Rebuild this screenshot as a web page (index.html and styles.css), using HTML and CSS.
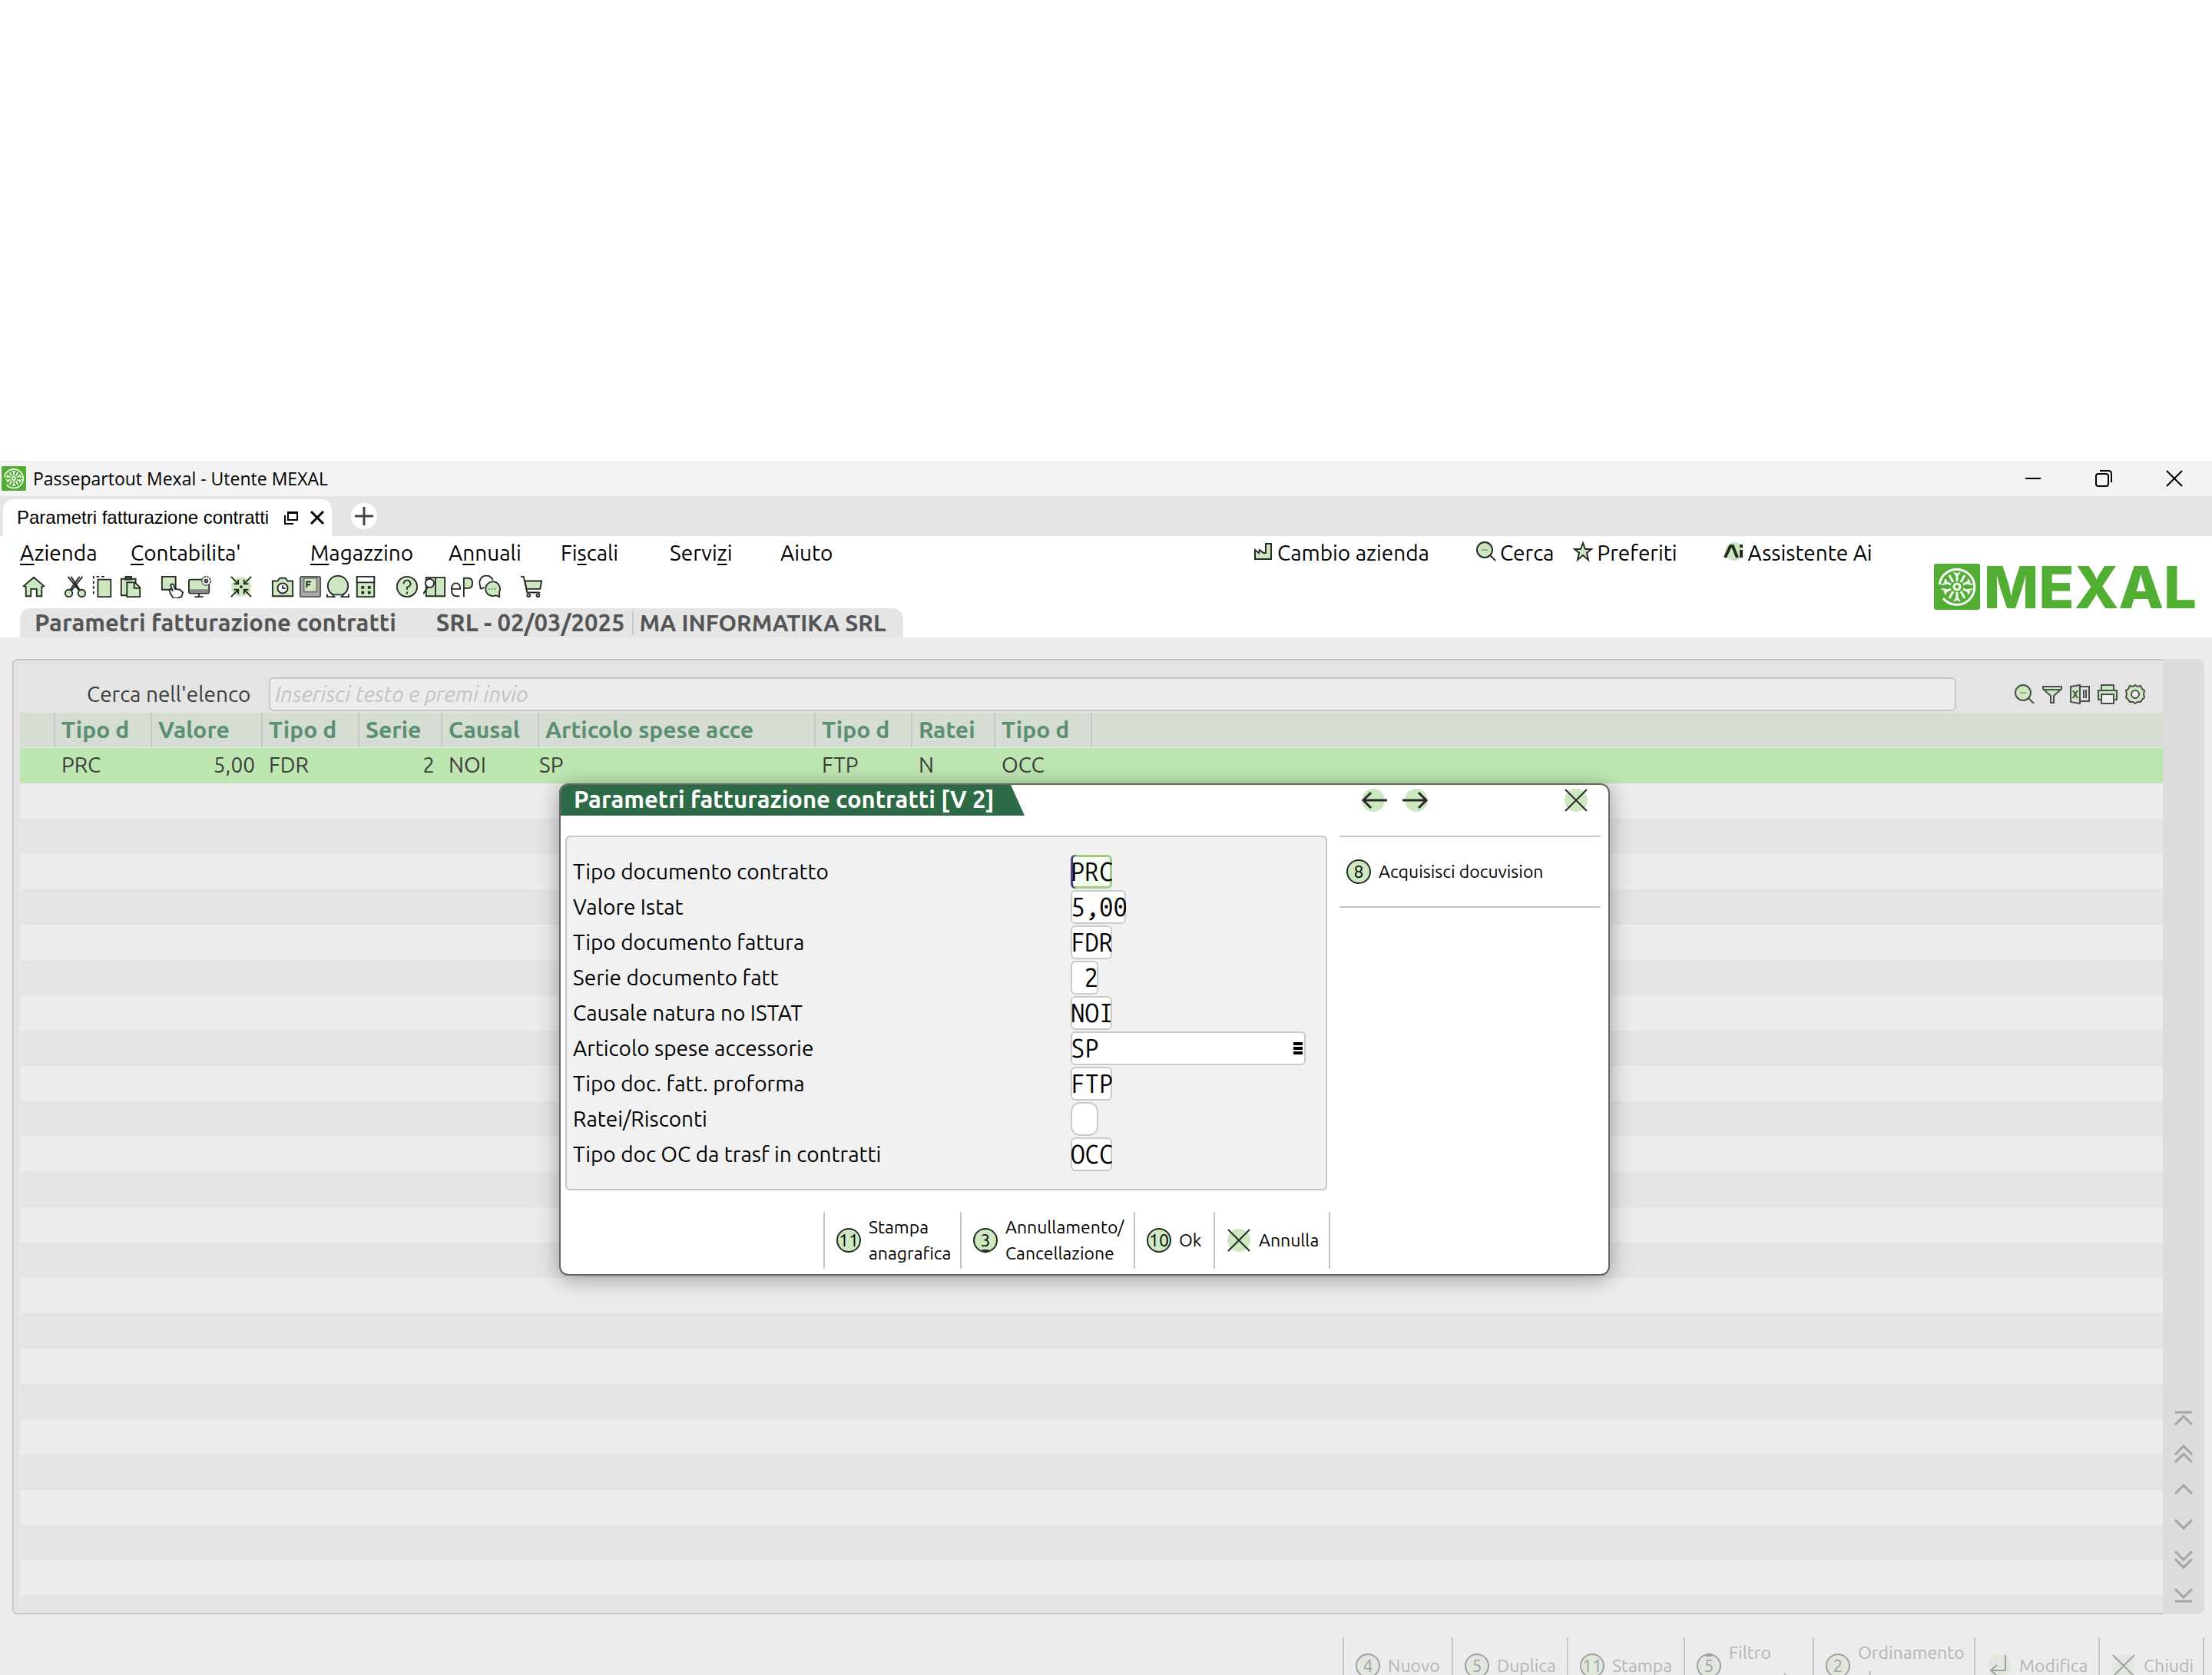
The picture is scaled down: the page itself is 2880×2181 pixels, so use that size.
FILE: index.html
```html
<!DOCTYPE html>
<html lang="it">
<head>
<meta charset="utf-8">
<title>Passepartout Mexal - Utente MEXAL</title>
<link rel="stylesheet" href="styles.css">
</head>
<body>
<svg class="defs" aria-hidden="true">
  <symbol id="emblem" viewBox="0 0 60 60">
    <rect width="60" height="60" rx="3" fill="#52ae32"/>
    <g fill="none" stroke="#fff" stroke-width="3">
      <path d="M7 27A23 23 0 1 1 12 45" stroke-width="3"/>
      <circle cx="30" cy="30" r="4"/>
      <path d="M30 23V12M25 24l-5-9M35 24l5-9M22 27l-9-4M38 27l9-4M22 33l-9 4M38 33l9 4M25 36l-5 9M35 36l5 9M30 37v11"/>
      <path d="M26 11l4 5 4-5M45 20l-1 6 6 1M45 40l-1-6 6-1M26 49l4-5 4 5M15 20l1 6-6 1M15 40l1-6-6-1" stroke-width="2"/>
    </g>
  </symbol>
  <symbol id="close" viewBox="0 0 32 32"><circle class="g" cx="16" cy="16" r="15" stroke="none"/><path d="M2 2l28 28M30 2L2 30"/></symbol>
  <symbol id="search" viewBox="0 0 28 28"><circle class="g" cx="12" cy="12" r="10"/><path d="M19 19l7 7"/><path d="M8 12h8" stroke="#9a9"/></symbol>
</svg>

<div class="window">
  <header class="titlebar">
    <svg class="app-icon"><use href="#emblem"/></svg>
    <span class="app-title">Passepartout Mexal - Utente MEXAL</span>
    <div class="controls">
      <button aria-label="Riduci"><svg viewBox="0 0 22 22"><path d="M1 11h20"/></svg></button>
      <button aria-label="Ripristina"><svg viewBox="0 0 22 22"><rect x="1" y="5" width="16" height="16" rx="3"/><path d="M6 1h11q4 0 4 4v11"/></svg></button>
      <button aria-label="Chiudi finestra"><svg viewBox="0 0 22 22"><path d="M1 1l20 20M21 1L1 21"/></svg></button>
    </div>
  </header>

  <nav class="tabs">
    <div class="tab">
      <span>Parametri fatturazione contratti</span>
      <button aria-label="Stacca scheda"><svg viewBox="0 0 18 18"><path d="M5 2h12v10H5zM1 6v11h11" /><path d="M5 3h12"/></svg></button>
      <button aria-label="Chiudi scheda"><svg viewBox="0 0 18 18"><path d="M1 1l16 16M17 1L1 17" stroke-width="3"/></svg></button>
    </div>
    <button class="new-tab" aria-label="Nuova scheda"><svg viewBox="0 0 34 34"><path d="M5 17h24M17 5v24"/></svg></button>
  </nav>

  <div class="head">
    <div class="head-main">
      <div class="menu-row">
        <nav class="menu">
          <a href="#"><u>A</u>zienda</a><a href="#"><u>C</u>ontabilita'</a><a href="#"><u>M</u>agazzino</a><a href="#">A<u>n</u>nuali</a><a href="#">Fi<u>s</u>cali</a><a href="#">Servi<u>z</u>i</a><a href="#">Aiuto</a>
        </nav>
        <nav class="links">
          <a class="wide" href="#"><svg viewBox="0 0 28 28"><path class="g" d="M3 12l5 4 1-4 5 4 3 0V4h7v20H3z"/></svg>Cambio azienda</a>
          <a href="#"><svg><use href="#search"/></svg>Cerca</a>
          <a class="wide" href="#"><svg viewBox="0 0 28 28"><path class="g" d="M14 3l3 8h8l-6 5 2 9-7-6-7 6 2-9-6-5h8z"/></svg>Preferiti</a>
          <a href="#"><svg viewBox="0 0 28 28"><circle class="g" cx="14" cy="14" r="12" stroke="none"/><path d="M2 22L9 7M8 7h4l6 15M23 12v10M23 5v4" stroke-width="4"/></svg>Assistente Ai</a>
        </nav>
      </div>
      <div class="tools">
        <div><button aria-label="Home"><svg viewBox="0 0 32 32"><path class="g" d="M2 15L16 3l14 12-3 1v13h-7V19h-8v10H5V16z"/></svg></button></div>
        <div>
          <button aria-label="Taglia"><svg viewBox="0 0 32 32"><path d="M6 2l15 19M26 2L11 21M10 2l12 18M22 2L9 20"/><circle class="g" cx="7" cy="25" r="5"/><circle class="g" cx="25" cy="25" r="5"/></svg></button>
          <button aria-label="Copia"><svg viewBox="0 0 32 32"><path d="M3 26V2h17" stroke-dasharray="4 3"/><path class="g" d="M9 6h18v24H9z"/></svg></button>
          <button aria-label="Incolla"><svg viewBox="0 0 32 32"><path class="g" d="M3 5h20v23H3z"/><path d="M9 2h8v4H9z" fill="#555"/><path class="g" d="M11 10h11l7 7v13H11z"/><path d="M21 10v8h8"/></svg></button>
        </div>
        <div>
          <button aria-label="Seleziona"><svg viewBox="0 0 32 32"><path class="g" d="M2 2h19v18H2z"/><path fill="#fff" d="M14 26l-2-6 3-1 2 3-3-8q1-3 4-1l2 6 7 1 4 4-2 6-6 2h-5z"/></svg></button>
          <button aria-label="Schermo"><svg viewBox="0 0 32 32"><rect class="g" x="1" y="6" width="28" height="19" rx="2"/><path d="M2 22h26" stroke="#888" stroke-width="5"/><path d="M15 25v4M9 30h12"/><circle cx="25" cy="8" r="6" fill="#fff" stroke="#555" stroke-dasharray="3 1"/><circle cx="25" cy="8" r="2"/></svg></button>
        </div>
        <div><button aria-label="Comprimi"><svg viewBox="0 0 32 32"><circle class="g" cx="16" cy="16" r="14" stroke="none"/><path d="M2 2l10 10M30 2L20 12M2 30l10-10M30 30L20 20M6 12h6V6M26 12h-6V6M6 20h6v6M26 20h-6v6M16 14v4M14 16h4"/></svg></button></div>
        <div>
          <button aria-label="Fotocamera"><svg viewBox="0 0 32 32"><path class="g" d="M2 8h7l3-4h8l3 4h7v21H2z"/><circle cx="16" cy="18" r="7" fill="#fff"/><path d="M16 14v4h4"/></svg></button>
          <button aria-label="Tasti funzione"><svg viewBox="0 0 32 32"><rect x="2" y="2" width="28" height="28" rx="2" fill="#aaa" stroke="#555"/><path class="g" d="M7 4h18v19H7z" stroke="#777"/><path d="M11 17V9h6M11 13h5"/></svg></button>
          <button aria-label="Caratteri speciali"><svg viewBox="0 0 32 32"><path class="g" d="M9 27A14 14 0 1 1 23 27z" /><path d="M1 26v4h10l-4-5M31 26v4H21l4-5"/></svg></button>
          <button aria-label="Calcolatrice"><svg viewBox="0 0 32 32"><path class="g" d="M4 2h24v28H4z"/><path d="M4 2h24v8H4z" fill="#fff"/><path d="M10 17h4M19 17h4M10 24h4M19 24h4" stroke-width="4"/></svg></button>
        </div>
        <div>
          <button aria-label="Guida"><svg viewBox="0 0 32 32"><circle class="g" cx="16" cy="16" r="14"/><path d="M11 12q1-5 5-5t5 5q0 3-5 5v3M16 23v3"/></svg></button>
          <button aria-label="Manuale"><svg viewBox="0 0 32 32"><path class="g" d="M4 3h13l13 0v26H4zM17 3v26"/><circle cx="9" cy="11" r="6" fill="#fff"/><path d="M6 17L0 26"/></svg></button>
          <button aria-label="ePass"><svg viewBox="0 0 32 32"><path class="g" d="M18 30V4h6q6 0 6 7t-6 7h-6"/><path d="M2 19h11q0-8-6-8t-6 9 6 9h5"/></svg></button>
          <button aria-label="Chat"><svg viewBox="0 0 32 32"><path d="M3 19l-1-6A9 9 0 0 1 20 7M3 19l5-2"/><path class="g" d="M29 30l-5-2A10 10 0 1 1 29 23z"/><path d="M14 19h12" stroke="#686" stroke-dasharray="2 2"/></svg></button>
        </div>
        <div><button aria-label="Carrello"><svg viewBox="0 0 32 32"><path class="g" d="M7 8h23l-2 11H9z"/><path d="M1 2h4l5 22h18"/><circle cx="12" cy="28" r="2"/><circle cx="25" cy="28" r="2"/></svg></button></div>
      </div>
      <div class="crumb"><b>Parametri fatturazione contratti</b><b>SRL - 02/03/2025</b><b class="firm">MA INFORMATIKA SRL</b></div>
    </div>
    <div class="logo"><svg><use href="#emblem"/></svg><span>MEXAL</span></div>
  </div>

  <main class="work">
    <section class="panel">
      <div class="list">
        <div class="search">
          <label for="find">Cerca nell'elenco</label>
          <input id="find" type="text" placeholder="Inserisci testo e premi invio">
          <div class="list-tools">
            <button aria-label="Cerca"><svg><use href="#search"/></svg></button>
            <button aria-label="Filtro"><svg viewBox="0 0 28 28"><path class="g" d="M2 4h24v3l-10 9v9h-4v-9L2 7zM2 8h24"/></svg></button>
            <button aria-label="Excel"><svg viewBox="0 0 28 28"><path d="M13 4h13v19H13M19 8v11M22 8v11"/><path class="g" d="M2 4l12-2v24L2 24zM5 9l6 10M11 9L5 19"/></svg></button>
            <button aria-label="Stampa"><svg viewBox="0 0 28 28"><path class="g" d="M6 8V2h16v6M6 21H2V9h24v12h-4"/><path d="M6 14h16v12H6z" fill="#eee"/></svg></button>
            <button aria-label="Impostazioni"><svg viewBox="0 0 28 28"><path class="g" d="M14 2l3 2 4-1 2 4 3 2-1 5 1 4-3 3-2 3-4 0-3 2-3-2-4 0-2-3-3-3 1-4-1-5 3-2 2-4 4 1z"/><circle cx="14" cy="14" r="5" fill="#eee"/></svg></button>
          </div>
        </div>
        <table>
          <colgroup><col class="c46"><col class="c126"><col class="c144"><col class="c126"><col class="c108"><col class="c126"><col class="c360"><col class="c126"><col class="c108"><col class="c126"><col></colgroup>
          <thead><tr><th></th><th>Tipo d</th><th>Valore</th><th>Tipo d</th><th>Serie</th><th>Causal</th><th>Articolo spese acce</th><th>Tipo d</th><th>Ratei</th><th>Tipo d</th><th></th></tr></thead>
          <tbody><tr><td></td><td>PRC</td><td class="num">5,00</td><td>FDR</td><td class="num">2</td><td>NOI</td><td class="flush">SP</td><td>FTP</td><td>N</td><td>OCC</td><td></td></tr></tbody>
        </table>
        <div class="empty-rows"></div>
      </div>
      <div class="scroller">
        <button aria-label="Inizio"><svg viewBox="0 0 24 24"><path d="M1 4h22M1 20L12 9l11 11"/></svg></button>
        <button aria-label="Pagina su"><svg viewBox="0 0 24 24"><path d="M1 13L12 2l11 11M1 23l11-11 11 11"/></svg></button>
        <button aria-label="Su"><svg viewBox="0 0 24 24"><path d="M1 18L12 7l11 11"/></svg></button>
        <button aria-label="Gi&ugrave;"><svg viewBox="0 0 24 24"><path d="M1 6l11 11L23 6"/></svg></button>
        <button aria-label="Pagina gi&ugrave;"><svg viewBox="0 0 24 24"><path d="M1 1l11 11L23 1M1 11l11 11 11-11"/></svg></button>
        <button aria-label="Fine"><svg viewBox="0 0 24 24"><path d="M1 4l11 11L23 4M1 20h22"/></svg></button>
      </div>
    </section>

    <footer class="actions disabled">
      <button class="c142"><i class="badge">4</i>Nuovo</button>
      <button class="c150"><i class="badge">5</i>Duplica</button>
      <button class="c152"><i class="badge">11</i>Stampa</button>
      <button class="c168"><i class="badge up">5</i>Filtro<br>avanzato</button>
      <button class="c210"><i class="badge">2</i>Ordinamento<br>elenco</button>
      <button class="c162"><svg viewBox="0 0 32 32"><circle class="g" cx="16" cy="16" r="15" stroke="none"/><path d="M24 2v20H6M13 15l-8 7 8 7"/></svg>Modifica</button>
      <button class="c138"><svg><use href="#close"/></svg>Chiudi</button>
    </footer>

    <section class="dialog" role="dialog" aria-labelledby="dlg-title">
      <header class="dialog-head">
        <h2 id="dlg-title">Parametri fatturazione contratti [V 2]</h2>
        <div class="arrows">
          <button aria-label="Precedente"><svg viewBox="0 0 36 32"><circle class="g" cx="16" cy="16" r="15" stroke="none"/><path d="M34 16H4M13 6L3 16l10 10" stroke-width="3"/></svg></button>
          <button aria-label="Successivo"><svg viewBox="0 0 36 32"><circle class="g" cx="20" cy="16" r="15" stroke="none"/><path d="M2 16h30M23 6l10 10-10 10" stroke-width="3"/></svg></button>
        </div>
        <button class="dialog-close" aria-label="Chiudi"><svg><use href="#close"/></svg></button>
      </header>
      <div class="dialog-body">
        <form>
          <div class="fields">
            <label for="f1">Tipo documento contratto</label><input id="f1" class="w3 focus" type="text" value="PRC">
            <label for="f2">Valore Istat</label><input id="f2" class="w4" type="text" value="5,00">
            <label for="f3">Tipo documento fattura</label><input id="f3" class="w3" type="text" value="FDR">
            <label for="f4">Serie documento fatt</label><input id="f4" class="w2" type="text" value="2">
            <label for="f5">Causale natura no ISTAT</label><input id="f5" class="w3" type="text" value="NOI">
            <label for="f6">Articolo spese accessorie</label><span class="lookup"><input id="f6" type="text" value="SP"><button type="button" aria-label="Elenco articoli"></button></span>
            <label for="f7">Tipo doc. fatt. proforma</label><input id="f7" class="w3" type="text" value="FTP">
            <label for="f8">Ratei/Risconti</label><input id="f8" class="w2 round" type="text" value="">
            <label for="f9">Tipo doc OC da trasf in contratti</label><input id="f9" class="w3" type="text" value="OCC">
          </div>
          <div class="actions">
            <button type="button" class="c178"><i class="badge">11</i>Stampa<br>anagrafica</button>
            <button type="button" class="c226"><i class="badge down">3</i>Annullamento/<br>Cancellazione</button>
            <button type="button" class="c104"><i class="badge">10</i>Ok</button>
            <button type="button" class="c152"><svg><use href="#close"/></svg>Annulla</button>
          </div>
        </form>
        <aside><button><i class="badge">8</i>Acquisisci docuvision</button></aside>
      </div>
    </section>
  </main>
</div>
</body>
</html>
```
FILE: styles.css
```css
* { box-sizing: border-box; }
html, body { height: 100%; }
body {
  margin: 0;
  overflow: hidden;
  padding-top: 600px;
  background: #fff;
  color: #000;
  font: 28px/46px Ubuntu, "Noto Sans", sans-serif;
}
.defs { position: absolute; width: 0; height: 0; }
svg { display: block; fill: none; stroke: #262b26; stroke-width: 2; }
.g { fill: var(--tint, #cde8c0); }
button { border: 0; padding: 0; margin: 0; background: none; color: inherit; font: inherit; }
a { color: inherit; text-decoration: none; }
u { text-decoration: underline; text-decoration-thickness: 2px; text-underline-offset: 4px; }
input { font: inherit; color: inherit; border: 0; padding: 0; margin: 0; outline: 0; }

/* title bar */
.titlebar { display: flex; align-items: center; height: 46px; padding: 0 38px 0 2px; background: #f3f3f3; }
.app-icon { width: 32px; height: 32px; stroke: none; }
.app-title { margin-left: 9px; font: 23px/46px "Open Sans", "Noto Sans", sans-serif; }
.controls { display: flex; gap: 70px; margin-left: auto; }
.controls svg { width: 22px; height: 22px; stroke: #000; }

/* document tabs */
.tabs { display: flex; align-items: flex-end; height: 52px; padding-left: 4px; background: #e5e5e5; }
.tab {
  display: flex; align-items: center; gap: 16px; height: 48px; padding: 0 10px 0 18px;
  border-radius: 14px 14px 0 0; background: #fff;
  font: 24px/48px "Liberation Sans", Arial, sans-serif;
}
.tab span { margin-right: 4px; }
.tab svg { width: 18px; height: 18px; stroke: #000; }
.new-tab { margin: 0 0 9px 25px; border-radius: 50%; background: #fff; }
.new-tab svg { width: 34px; height: 34px; stroke: #444; stroke-width: 3; }

/* menu, toolbar and logo */
.head { display: flex; height: 132px; }
.head-main { flex: 1; padding-left: 26px; }
.menu-row { display: flex; justify-content: space-between; height: 44px; line-height: 44px; white-space: nowrap; }
.menu { display: grid; grid-template-columns: 144px 234px 180px 146px 142px 144px auto; }
.links { display: flex; margin-right: 80px; }
.links a { display: flex; gap: 4px; margin-right: 24px; }
.links .wide { margin-right: 60px; }
.links a:last-child { margin-right: 0; }
.links svg { width: 28px; height: 28px; margin-top: 6px; }
.tools { display: flex; gap: 18px; height: 50px; align-items: center; padding-bottom: 6px; }
.tools div { display: flex; }
.tools button { display: flex; justify-content: center; width: 36px; }
.tools svg { width: 30px; height: 30px; }
.crumb {
  display: flex; width: fit-content; height: 38px; padding: 4px 22px 4px 19px; border-radius: 14px 14px 0 0;
  background: #e5e5e5; color: #555; font-size: 31px; line-height: 30px; white-space: nowrap;
}
.crumb b + b { margin-left: 52px; }
.crumb b.firm { margin-left: 9px; padding-left: 8px; border-left: 2px solid #c8c8c8; font-size: 30px; }
.logo { display: flex; align-items: center; gap: 5px; height: 60px; margin: 36px 20px 0 0; color: #52ae32; font: 800 76px/60px Inter, sans-serif; }
.logo svg { width: 60px; height: 60px; stroke: none; }

/* work area */
.work { position: relative; padding: 28px 10px 0 16px; background: #ececec; }
.panel { display: flex; }
.list { flex: 1; padding: 22px 0 0 8px; border: 2px solid #c6c6c6; border-right: 0; border-radius: 6px 0 0 6px; background: #e4e4e4; color: #3d3d3d; }
.search { display: flex; align-items: center; height: 46px; padding: 0 18px 2px 87px; line-height: 44px; }
.search input { flex: 1; height: 44px; margin: 0 71px 0 24px; padding: 0 6px; border: 2px solid #c6c6c6; border-radius: 6px; background: #ececec; }
.search input::placeholder { color: #c2c2c2; font-style: italic; opacity: 1; }
.list-tools { display: flex; }
.list-tools button { display: flex; justify-content: center; width: 36px; }
.list-tools svg { width: 28px; height: 28px; stroke: #4a4f4a; }
table { width: 100%; table-layout: fixed; border-collapse: separate; border-spacing: 0; }
.c46 { width: 46px; }
.c104 { width: 104px; }
.c108 { width: 108px; }
.c126 { width: 126px; }
.c138 { width: 138px; }
.c142 { width: 142px; }
.c144 { width: 144px; }
.c150 { width: 150px; }
.c152 { width: 152px; }
.c162 { width: 162px; }
.c168 { width: 168px; }
.c178 { width: 178px; }
.c210 { width: 210px; }
.c226 { width: 226px; }
.c360 { width: 360px; }
th, td { height: 46px; padding: 0 8px; text-align: left; white-space: nowrap; line-height: 44px; }
th { border-right: 2px solid #c6c6c6; border-bottom: 2px solid #e4e4e4; background: #d5dcd1; color: #5a8f73; font-size: 30px; }
th:last-child { border-right: 0; }
td { padding-bottom: 2px; background: #bee6b1; }
.num { padding-right: 10px; text-align: right; }
.flush { padding-left: 0; }
.empty-rows { height: 1080px; background: repeating-linear-gradient(#ececec 0 46px, #e4e4e4 46px 92px); }
.scroller { display: flex; flex-direction: column; justify-content: flex-end; width: 54px; padding-bottom: 2px; border-radius: 0 10px 10px 0; background: #dcdcdc; }
.scroller button { display: flex; align-items: center; justify-content: center; height: 46px; }
.scroller svg { width: 24px; height: 24px; stroke: #a4a4a4; stroke-width: 3; }

/* function-key buttons */
.actions { display: flex; justify-content: flex-end; height: 74px; }
.actions button {
  display: grid; grid-template-columns: 32px auto; justify-content: start; align-items: center; column-gap: 10px;
  padding-left: 15px; border-left: 2px solid #c6c6c6; font-size: 23px; line-height: 34px; text-align: left; white-space: nowrap;
}
.actions button:last-child { border-right: 2px solid #c6c6c6; }
.actions svg { width: 32px; height: 32px; }
.badge {
  position: relative; display: block; width: 32px; height: 32px; border: 2px solid #262b26; border-radius: 50%;
  background: #cde8c0; font: 23px/28px Ubuntu, "Noto Sans", sans-serif; text-align: center;
}
.badge.up::after, .badge.down::after {
  content: ""; position: absolute; left: 9px; border: 5px solid transparent;
}
.badge.down::after { bottom: -8px; border-top-color: #262b26; }
.badge.up::after { top: -8px; border-bottom-color: #a0a0a0; }
.disabled { --tint: #e0e7dc; margin-top: 30px; color: #b4b4b4; }
.disabled .badge { border-color: #a0a0a0; background: #e0e7dc; color: #a0a0a0; }
.disabled svg { stroke: #a0a0a0; }

/* dialog */
.dialog {
  position: absolute; left: 728px; top: 190px; width: 1368px;
  border: 2px solid #666; border-radius: 12px; background: #fff;
  box-shadow: 0 4px 28px rgba(0, 0, 0, .35);
}
.dialog-head { display: flex; height: 66px; }
.dialog-head h2 {
  width: 604px; height: 40px; margin: 0; padding-left: 17px; border-radius: 10px 0 0 0; background: #2d6b46;
  clip-path: polygon(0 0, 586px 0, 604px 100%, 0 100%);
  color: #fff; font-size: 31px; line-height: 38px; white-space: nowrap;
}
.arrows { display: flex; gap: 16px; margin: 4px 0 0 438px; }
.arrows button, .dialog-close { height: 32px; }
.arrows svg { width: 36px; height: 32px; }
.dialog-close { margin: 4px 26px 0 auto; }
.dialog-close svg { width: 32px; height: 32px; }
.dialog-body { display: flex; gap: 12px; padding: 0 10px 7px 6px; }
form { width: 996px; }
.fields {
  display: grid; grid-template-columns: 648px auto; grid-auto-rows: 46px; align-items: center; justify-items: start;
  width: 992px; padding: 22px 8px; border: 2px solid #c6c6c6; border-radius: 6px; background: #f1f1f1;
}
.fields label { line-height: 44px; }
.fields input {
  height: 44px; padding-bottom: 2px; border-radius: 6px; background: #fff; box-shadow: inset 0 0 0 2px #cacaca;
  font: 33px/42px "Ubuntu Mono", "Noto Sans Mono CJK SC", monospace;
}
.fields .w2 { width: 36px; text-align: right; }
.fields .w3 { width: 54px; }
.fields .w4 { width: 72px; }
.fields .round { border-radius: 12px; }
.fields .focus { background: #f5fdf0; box-shadow: inset 3px 0 #4a3d8c, inset 0 0 0 3px #a3cb83; }
.lookup { display: grid; grid-template-columns: 306px; }
.lookup > * { grid-area: 1 / 1; }
.lookup input { width: 100%; }
.lookup button {
  justify-self: end; align-self: center; width: 12px; height: 16px; margin-right: 4px;
  background: repeating-linear-gradient(#000 0 4px, transparent 4px 6px);
}
form .actions { margin-top: 28px; }
aside { flex: 1; }
aside button {
  display: flex; align-items: center; gap: 10px; width: 100%; height: 94px; padding-left: 9px;
  border: solid #c6c6c6; border-width: 2px 0; font-size: 23px;
}
```
